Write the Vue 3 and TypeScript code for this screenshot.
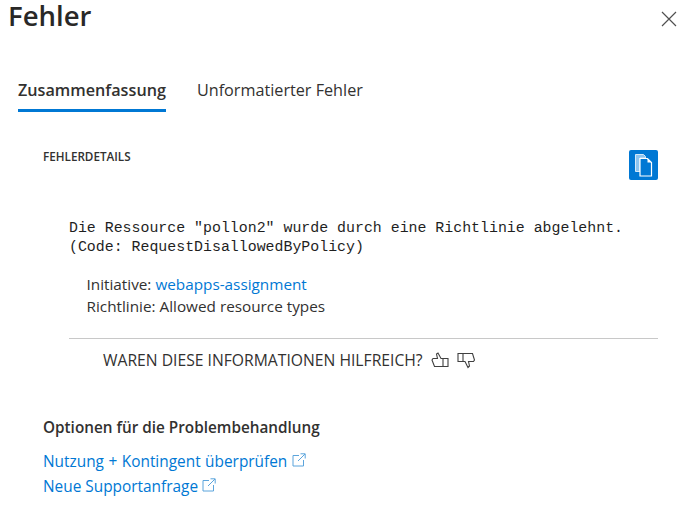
<template>
  <div class="blade">
    <header class="head">
      <h1 class="title">Fehler</h1>
      <button class="close" aria-label="Schließen">
        <svg width="16" height="16" viewBox="0 0 16 16">
          <path d="M1 1 L15 15 M15 1 L1 15" stroke="#505050" stroke-width="1.2" fill="none" />
        </svg>
      </button>
    </header>

    <nav class="tabs">
      <span v-for="tab in tabs" :key="tab" class="tab" :class="{ active: tab === activeTab }">{{ tab }}</span>
    </nav>

    <section class="details">
      <div class="details-head">
        <span class="caption">FEHLERDETAILS</span>
        <button class="copy" aria-label="Kopieren">
          <svg width="20" height="24" viewBox="0 0 20 24" fill="none">
            <path d="M1.5 1.5 H9.5 L11.5 3.5 V5 H6 V18.5 H1.5 Z" fill="#8cc4ef" stroke="#d5e9f9" />
            <path d="M6 5.5 H13.5 L17.5 9.5 V23 H6 Z" fill="#0078d4" stroke="#fff" stroke-width="1.2" />
            <path d="M13.5 5.5 V9.5 H17.5 Z" fill="#fff" />
          </svg>
        </button>
      </div>

      <pre class="message">Die Ressource "pollon2" wurde durch eine Richtlinie abgelehnt.
(Code: RequestDisallowedByPolicy)</pre>

      <div class="policy">
        <div>Initiative: <a class="link">webapps-assignment</a></div>
        <div>Richtlinie: Allowed resource types</div>
      </div>

      <div class="feedback">
        <span class="question">WAREN DIESE INFORMATIONEN HILFREICH?</span>
        <svg width="18" height="18" viewBox="0 0 18 18" fill="none" stroke="#404040" stroke-width="1.1">
          <path d="M12 7.5 H17 V15.5 H12 Z M12 7.5 H10 L7 2 L5.5 3 L6.5 7.5 H2 L1 9 L3.5 15.5 H12" />
        </svg>
        <svg width="18" height="18" viewBox="0 0 18 18" fill="none" stroke="#404040" stroke-width="1.1">
          <path d="M6 10.5 H1 V2.5 H6 Z M6 2.5 H15.5 L17.5 9 L16.5 10.5 H11.5 L12.5 15 L11 16.5 L8 10.5 H6" />
        </svg>
      </div>
    </section>

    <section class="options">
      <h2 class="options-title">Optionen für die Problembehandlung</h2>
      <a v-for="item in links" :key="item" class="link option">
        {{ item }}
        <svg class="ext" width="14" height="14" viewBox="0 0 14 14" fill="none" stroke="#5ba4dc" stroke-width="1">
          <path d="M7 2.5 H1 V13 H11.5 V7 M6 8 L13 1 M8.5 0.8 H13.2 V5.5" />
        </svg>
      </a>
    </section>
  </div>
</template>

<script setup lang="ts">
const tabs: string[] = ['Zusammenfassung', 'Unformatierter Fehler'];
const activeTab = 'Zusammenfassung';
const links: string[] = ['Nutzung + Kontingent überprüfen', 'Neue Supportanfrage'];
</script>

<style>
body {
  background: #fff;
}
</style>

<style scoped>
.blade {
  width: 681px;
  height: 512px;
  overflow: hidden;
  box-sizing: border-box;
  font-family: 'Open Sans', 'Noto Sans', sans-serif;
  color: #323130;
  font-size: 14px;
}

.head {
  display: flex;
  justify-content: space-between;
  padding: 0 0 0 8px;
  height: 34px;
}

.title {
  margin: 0;
  font-size: 27.5px;
  line-height: 32px;
  font-weight: 600;
  color: #292827;
}

.close {
  border: 0;
  padding: 7px 1px 0 0;
  background: none;
  width: 24px;
  height: 34px;
}

.tabs {
  display: flex;
  gap: 31px;
  padding: 0 0 0 18px;
  margin-top: 44px;
}

.tab {
  font-size: 16.2px;
  line-height: 24px;
  padding-bottom: 7px;
  border-bottom: 3px solid transparent;
}

.tab.active {
  font-weight: 600;
  border-bottom-color: #0078d4;
}

.details {
  padding: 0 23px 0 43px;
  margin-top: 38px;
}

.details-head {
  display: flex;
  justify-content: space-between;
  align-items: flex-start;
}

.caption {
  font-size: 11.7px;
  font-weight: 600;
  line-height: 16px;
  margin-top: -2px;
}

.copy {
  width: 29px;
  height: 30px;
  padding: 0;
  border: 0;
  border-radius: 2px;
  background: #0078d4;
  display: flex;
  align-items: center;
  justify-content: center;
}

.message {
  margin: 39px 0 0 26px;
  font-family: 'Liberation Mono', monospace;
  font-size: 14.9px;
  line-height: 19px;
  color: #1f1f1f;
}

.policy {
  margin: 16px 0 0 43.5px;
  font-size: 15.3px;
  line-height: 22px;
}

.link {
  color: #0078d4;
  text-decoration: none;
}

.feedback {
  display: flex;
  align-items: center;
  gap: 8px;
  margin: 21px 0 0 26px;
  padding-left: 34px;
  border-top: 1px solid #c8c8c8;
  height: 42px;
  font-size: 15.7px;
}

.question {
  margin-right: 0;
}

.options {
  padding: 0 0 0 43px;
  margin-top: 35px;
}

.options-title {
  margin: 0 0 11px;
  font-size: 15.3px;
  line-height: 22px;
  font-weight: 600;
}

.option {
  display: block;
  font-size: 15.4px;
  line-height: 25px;
}

.option:first-of-type {
  word-spacing: 0.5px;
}

.ext {
  vertical-align: 0;
  margin-left: 0;
}
</style>
